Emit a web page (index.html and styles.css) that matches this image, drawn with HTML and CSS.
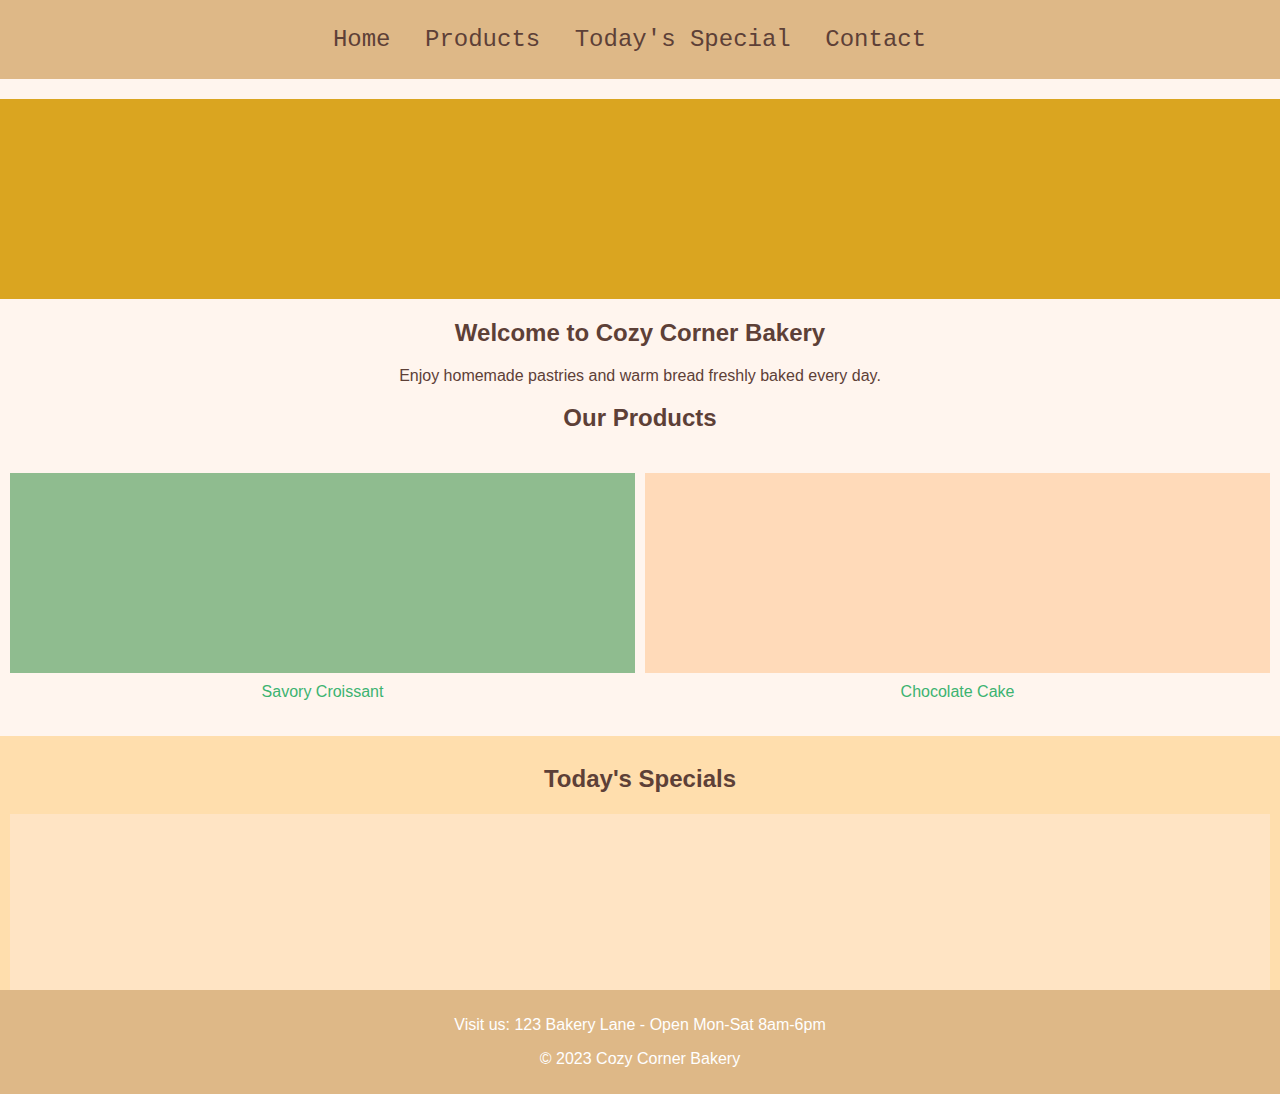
FILE: index.html
```html
<!DOCTYPE html>
<html lang="en">
<head>
<meta charset="utf-8">
<title>Cozy Corner Bakery</title>
<link rel="stylesheet" href="styles.css">
</head>
<body>
<nav class="nav">
  <a href="#" class="nav-link">Home</a>
  <a href="#" class="nav-link">Products</a>
  <a href="#" class="nav-link">Today's Special</a>
  <a href="#" class="nav-link">Contact</a>
</nav>
<div class="hero"></div>
<section class="intro">
  <h2 class="title">Welcome to Cozy Corner Bakery</h2>
  <p class="lead">Enjoy homemade pastries and warm bread freshly baked every day.</p>
  <h2 class="title">Our Products</h2>
</section>
<section class="products">
  <div class="product">
    <div class="product-img green"></div>
    <p class="product-name">Savory Croissant</p>
  </div>
  <div class="product">
    <div class="product-img peach"></div>
    <p class="product-name">Chocolate Cake</p>
  </div>
</section>
<section class="specials">
  <h2 class="title specials-title">Today's Specials</h2>
  <div class="special-box"></div>
</section>
<footer class="footer">
  <p class="footer-line">Visit us: 123 Bakery Lane - Open Mon-Sat 8am-6pm</p>
  <p class="footer-line">© 2023 Cozy Corner Bakery</p>
</footer>
</body>
</html>
```
FILE: styles.css
```css
* { box-sizing: border-box; }
html, body { margin: 0; padding: 0; }
body {
  background: #FFF5EE;
  font-family: "Liberation Sans", Arial, sans-serif;
  color: #5D4037;
}
.nav {
  background: #DEB887;
  height: 79px;
  display: flex;
  justify-content: center;
  align-items: center;
  gap: 34.5px;
  padding-right: 21px;
}
.nav-link {
  font-family: "Liberation Mono", "Courier New", monospace;
  font-size: 24px;
  color: #5D4037;
  text-decoration: none;
  line-height: 28px;
}
.hero {
  margin-top: 20px;
  height: 200px;
  background: #DAA520;
}
.intro {
  text-align: center;
  padding-top: 20px;
}
.title {
  margin: 0;
  font-size: 24px;
  font-weight: bold;
  line-height: 28px;
  text-align: center;
  color: #5D4037;
}
.lead {
  margin: 20px 0 19px;
  font-size: 16px;
  line-height: 18px;
}
.products {
  display: grid;
  grid-template-columns: 1fr 1fr;
  gap: 10px;
  padding: 41px 10px 35px;
}
.product-img { height: 200px; }
.green { background: #8FBC8F; }
.peach { background: #FFDAB9; }
.product-name {
  margin: 10px 0 0;
  text-align: center;
  font-size: 16px;
  line-height: 18px;
  color: #3CB371;
}
.specials {
  background: #FFDEAD;
  padding: 29px 10px 0;
}
.specials-title { margin-bottom: 21px; }
.special-box {
  height: 176px;
  background: #FFE4C4;
}
.footer {
  background: #DEB887;
  padding: 26px 0 26px;
  text-align: center;
  color: #FFFFFF;
}
.footer-line {
  margin: 0;
  font-size: 16px;
  line-height: 18px;
}
.footer-line + .footer-line { margin-top: 16px; }
```
